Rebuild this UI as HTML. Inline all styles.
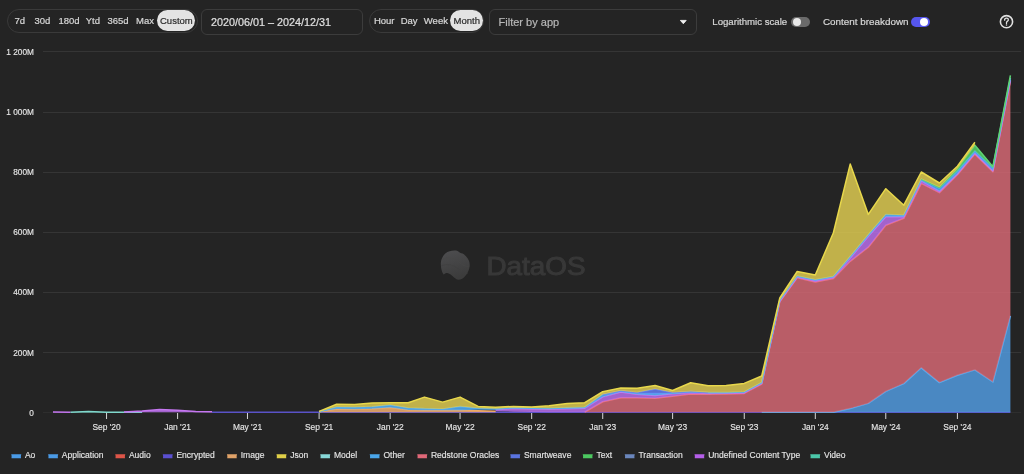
<!DOCTYPE html>
<html><head><meta charset="utf-8"><style>
html,body{-webkit-font-smoothing:antialiased;margin:0;padding:0;width:1024px;height:474px;overflow:hidden;background:#242424;font-family:"Liberation Sans",sans-serif;}
.a{position:absolute;}
.wrap{position:absolute;left:0;top:0;width:1024px;height:474px;will-change:transform;}
.pill{position:absolute;border:1px solid #3a3a3a;border-radius:13px;box-sizing:border-box;}
.t{position:absolute;color:#d8d8d8;font-size:9.5px;line-height:12px;white-space:nowrap;-webkit-text-stroke:0.2px currentColor;}
.sel{position:absolute;background:#e3e3e3;border-radius:11px;}
.box{position:absolute;border:1px solid #3c3c3c;border-radius:6px;box-sizing:border-box;}
</style></head><body><div class="wrap">
<div class="pill" style="left:7px;top:9px;width:191px;height:24px;"></div>
<div class="t" style="left:14.5px;top:14.5px;">7d</div>
<div class="t" style="left:34.5px;top:14.5px;">30d</div>
<div class="t" style="left:58.5px;top:14.5px;">180d</div>
<div class="t" style="left:85.7px;top:14.5px;">Ytd</div>
<div class="t" style="left:107.5px;top:14.5px;">365d</div>
<div class="t" style="left:136px;top:14.5px;">Max</div>
<div class="sel" style="left:156.5px;top:10.3px;width:38px;height:21px;"></div>
<div class="t" style="left:160px;top:14.5px;color:#2a2a2a;">Custom</div>
<div class="box" style="left:201px;top:9px;width:162px;height:26px;"></div>
<div class="t" style="left:211px;top:15.5px;font-size:10.8px;color:#e0e0e0;">2020/06/01 – 2024/12/31</div>
<div class="pill" style="left:368.5px;top:9px;width:115px;height:24px;"></div>
<div class="t" style="left:373.9px;top:14.5px;">Hour</div>
<div class="t" style="left:400.7px;top:14.5px;">Day</div>
<div class="t" style="left:423.8px;top:14.5px;">Week</div>
<div class="sel" style="left:450px;top:10.4px;width:32.5px;height:20.5px;"></div>
<div class="t" style="left:453.6px;top:14.5px;color:#2a2a2a;">Month</div>
<div class="box" style="left:489px;top:9px;width:208px;height:26px;"></div>
<div class="t" style="left:498.6px;top:15.5px;font-size:11px;color:#b8b8b8;">Filter by app</div>
<svg class="a" style="left:679px;top:19px" width="9" height="6"><path d="M1.4,1.4 L7.2,1.4 L4.3,4.7 Z" fill="#f0f0f0" stroke="#f0f0f0" stroke-width="0.9" stroke-linejoin="round"/></svg>
<div class="t" style="left:712.3px;top:15.5px;font-size:9.65px;">Logarithmic scale</div>
<div class="a" style="left:791px;top:16.5px;width:18.5px;height:10.5px;border-radius:5.25px;background:#6a6a6a;"></div>
<div class="a" style="left:792.5px;top:17.5px;width:8.5px;height:8.5px;border-radius:50%;background:#e8e8e8;"></div>
<div class="t" style="left:823px;top:15.5px;font-size:9.87px;">Content breakdown</div>
<div class="a" style="left:911px;top:16.5px;width:18.5px;height:10.5px;border-radius:5.25px;background:#5656ee;"></div>
<div class="a" style="left:919.5px;top:17.5px;width:8.5px;height:8.5px;border-radius:50%;background:#ffffff;"></div>
<svg class="a" style="left:998px;top:13px" width="18" height="18"><circle cx="8.5" cy="8.7" r="6.1" fill="none" stroke="#e0e0e0" stroke-width="1.6"/><path d="M6.6,7.2 C6.6,5.9 7.4,5.2 8.5,5.2 C9.6,5.2 10.4,5.9 10.4,6.9 C10.4,8 8.5,8.3 8.5,9.6 L8.5,10.4" fill="none" stroke="#e0e0e0" stroke-width="1.3" stroke-linecap="round"/><circle cx="8.5" cy="12.1" r="0.75" fill="#e0e0e0"/></svg>
<svg class="a" style="left:0;top:0" width="1024" height="474">
<line x1="43" x2="1021" y1="51.50" y2="51.50" stroke="#353535" stroke-width="1"/>
<g transform="translate(33.9,54.70) scale(0.93,1)"><text x="0" y="0" text-anchor="end" fill="#e6e6e6" stroke="#e6e6e6" stroke-width="0.15" font-size="8.9" font-family="Liberation Sans, sans-serif">1 200M</text></g>
<line x1="43" x2="1021" y1="112.50" y2="112.50" stroke="#353535" stroke-width="1"/>
<g transform="translate(33.9,114.87) scale(0.93,1)"><text x="0" y="0" text-anchor="end" fill="#e6e6e6" stroke="#e6e6e6" stroke-width="0.15" font-size="8.9" font-family="Liberation Sans, sans-serif">1 000M</text></g>
<line x1="43" x2="1021" y1="172.50" y2="172.50" stroke="#353535" stroke-width="1"/>
<g transform="translate(33.9,175.03) scale(0.93,1)"><text x="0" y="0" text-anchor="end" fill="#e6e6e6" stroke="#e6e6e6" stroke-width="0.15" font-size="8.9" font-family="Liberation Sans, sans-serif">800M</text></g>
<line x1="43" x2="1021" y1="232.50" y2="232.50" stroke="#353535" stroke-width="1"/>
<g transform="translate(33.9,235.20) scale(0.93,1)"><text x="0" y="0" text-anchor="end" fill="#e6e6e6" stroke="#e6e6e6" stroke-width="0.15" font-size="8.9" font-family="Liberation Sans, sans-serif">600M</text></g>
<line x1="43" x2="1021" y1="292.50" y2="292.50" stroke="#353535" stroke-width="1"/>
<g transform="translate(33.9,295.37) scale(0.93,1)"><text x="0" y="0" text-anchor="end" fill="#e6e6e6" stroke="#e6e6e6" stroke-width="0.15" font-size="8.9" font-family="Liberation Sans, sans-serif">400M</text></g>
<line x1="43" x2="1021" y1="352.50" y2="352.50" stroke="#353535" stroke-width="1"/>
<g transform="translate(33.9,355.53) scale(0.93,1)"><text x="0" y="0" text-anchor="end" fill="#e6e6e6" stroke="#e6e6e6" stroke-width="0.15" font-size="8.9" font-family="Liberation Sans, sans-serif">200M</text></g>
<line x1="43" x2="1021" y1="412.50" y2="412.50" stroke="#2e2e2e" stroke-width="1"/>
<g transform="translate(33.9,415.70) scale(0.93,1)"><text x="0" y="0" text-anchor="end" fill="#e6e6e6" stroke="#e6e6e6" stroke-width="0.15" font-size="8.9" font-family="Liberation Sans, sans-serif">0</text></g>
<defs><linearGradient id="lg" x1="0" y1="0" x2="0.3" y2="1"><stop offset="0" stop-color="#4e4e50"/><stop offset="1" stop-color="#3c3c3c"/></linearGradient></defs>
<g transform="translate(436,246)"><path d="M 9.6,7.2 C 12,5.2 16,4.4 19.2,4.6 C 20.5,4.7 21.5,5 22,5.2 C 23.2,6.4 24.8,7.4 26.6,7.6 C 30.5,10 33.6,14 33.7,18.4 C 33.8,23.5 31.3,28.6 27.3,32 C 25.8,33.2 24,33.8 22.5,33.7 C 20.5,33.3 19.5,32.5 18.4,31.7 C 16.5,30 15,28.5 13.6,28 C 12.2,27 11,26.8 10.4,26.9 C 9.2,27.1 8.4,28 7.6,28.5 C 5.8,26.5 4.8,22 4.8,17.6 C 4.8,13.8 6.8,9.6 9.6,7.2 Z" fill="url(#lg)"/>
<path d="M5.5,14 C 12,10 18,12 24,17 C 28,20 31,21 33.5,20" fill="none" stroke="#484848" stroke-width="1" opacity="0.6"/>
<path d="M5,20 C 12,17 18,19 24,24 C 27,26.5 30,28 32,27" fill="none" stroke="#404040" stroke-width="1" opacity="0.6"/>
</g>
<text x="486.5" y="275.4" fill="#383838" stroke="#383838" stroke-width="1" font-size="26.5" font-family="Liberation Sans, sans-serif" textLength="99" lengthAdjust="spacingAndGlyphs">DataOS</text>
<path d="M212.0,412.20 L230.0,412.20 L247.5,412.20 L265.5,412.20 L283.0,412.20 L301.1,412.20 L319.1,412.20 L336.6,412.20 L354.6,412.20 L372.1,412.20 L390.2,412.20 L408.2,412.20 L424.5,412.20 L442.6,412.20 L460.1,412.20 L478.1,412.20 L495.6,412.20 L513.6,412.20 L531.7,412.20 L549.2,412.20 L567.2,412.20 L584.7,412.20 L602.7,412.20 L620.8,412.20 L637.1,412.20 L655.1,412.20 L672.6,412.20 L690.7,412.20 L708.1,412.20 L726.2,412.20 L744.2,412.20 L761.7,412.20 L779.8,412.20 L797.2,412.20 L815.3,412.20 L833.4,412.20 L850.2,412.20 L868.3,412.20 L885.8,412.20 L903.8,412.20 L921.3,412.20 L939.4,412.20 L957.4,412.20 L974.9,412.20 L992.9,412.20 L1010.4,412.20 L1010.4,412.20 L992.9,412.20 L974.9,412.20 L957.4,412.20 L939.4,412.20 L921.3,412.20 L903.8,412.20 L885.8,412.20 L868.3,412.20 L850.2,412.20 L833.4,412.20 L815.3,412.20 L797.2,412.20 L779.8,412.20 L761.7,412.20 L744.2,412.20 L726.2,412.20 L708.1,412.20 L690.7,412.20 L672.6,412.20 L655.1,412.20 L637.1,412.20 L620.8,412.20 L602.7,412.20 L584.7,412.20 L567.2,412.20 L549.2,412.20 L531.7,412.20 L513.6,412.20 L495.6,412.20 L478.1,412.20 L460.1,412.20 L442.6,412.20 L424.5,412.20 L408.2,412.20 L390.2,412.20 L372.1,412.20 L354.6,412.20 L336.6,412.20 L319.1,412.20 L301.1,412.20 L283.0,412.20 L265.5,412.20 L247.5,412.20 L230.0,412.20 L212.0,412.20Z" fill="rgb(100,90,229)" fill-opacity="0.85"/>
<path d="M212.0,412.20 L230.0,412.20 L247.5,412.20 L265.5,412.20 L283.0,412.20 L301.1,412.20 L319.1,412.20 L336.6,412.20 L354.6,412.20 L372.1,412.20 L390.2,412.20 L408.2,412.20 L424.5,412.20 L442.6,412.20 L460.1,412.20 L478.1,412.20 L495.6,412.20 L513.6,412.20 L531.7,412.20 L549.2,412.20 L567.2,412.20 L584.7,412.20 L602.7,412.20 L620.8,412.20 L637.1,412.20 L655.1,412.20 L672.6,412.20 L690.7,412.20 L708.1,412.20 L726.2,412.20 L744.2,412.20 L761.7,412.20 L779.8,412.20 L797.2,412.20 L815.3,412.20 L833.4,412.20 L850.2,412.20 L868.3,412.20 L885.8,412.20 L903.8,412.20 L921.3,412.20 L939.4,412.20 L957.4,412.20 L974.9,412.20 L992.9,412.20 L1010.4,412.20" fill="none" stroke="#5a52c8" stroke-width="1.5" stroke-linejoin="round"/>
<path d="M70.4,412.20 L88.5,411.40 L106.5,412.20 L124.0,412.20 L142.1,412.20 L142.1,412.20 L124.0,412.20 L106.5,412.20 L88.5,412.20 L70.4,412.20Z" fill="rgb(107,224,205)" fill-opacity="0.85"/>
<path d="M70.4,412.20 L88.5,411.40 L106.5,412.20 L124.0,412.20 L142.1,412.20" fill="none" stroke="#80d8cc" stroke-width="1.5" stroke-linejoin="round"/>
<path d="M761.7,412.20 L779.8,412.20 L797.2,412.20 L815.3,412.20 L833.4,412.20 L850.2,408.60 L868.3,403.40 L885.8,391.40 L903.8,383.60 L921.3,367.80 L939.4,382.60 L957.4,375.20 L974.9,369.90 L992.9,382.00 L1010.4,315.90 L1010.4,412.20 L992.9,412.20 L974.9,412.20 L957.4,412.20 L939.4,412.20 L921.3,412.20 L903.8,412.20 L885.8,412.20 L868.3,412.20 L850.2,412.20 L833.4,412.20 L815.3,412.20 L797.2,412.20 L779.8,412.20 L761.7,412.20Z" fill="rgb(81,154,222)" fill-opacity="0.85"/>
<path d="M761.7,412.20 L779.8,412.20 L797.2,412.20 L815.3,412.20 L833.4,412.20 L850.2,408.60 L868.3,403.40 L885.8,391.40 L903.8,383.60 L921.3,367.80 L939.4,382.60 L957.4,375.20 L974.9,369.90 L992.9,382.00 L1010.4,315.90" fill="none" stroke="#5aaef2" stroke-width="1.5" stroke-linejoin="round"/>
<path d="M319.1,411.70 L336.6,409.10 L354.6,409.20 L372.1,408.70 L390.2,407.50 L408.2,409.90 L424.5,410.20 L442.6,410.20 L460.1,410.20 L478.1,410.70 L495.6,411.20 L495.6,412.20 L478.1,412.20 L460.1,412.20 L442.6,412.20 L424.5,412.20 L408.2,412.20 L390.2,412.20 L372.1,412.20 L354.6,412.20 L336.6,412.20 L319.1,412.20Z" fill="rgb(242,175,109)" fill-opacity="0.85"/>
<path d="M319.1,411.70 L336.6,409.10 L354.6,409.20 L372.1,408.70 L390.2,407.50 L408.2,409.90 L424.5,410.20 L442.6,410.20 L460.1,410.20 L478.1,410.70 L495.6,411.20" fill="none" stroke="#eeaa6a" stroke-width="1.5" stroke-linejoin="round"/>
<path d="M584.7,412.20 L602.7,401.75 L620.8,397.70 L637.1,397.70 L655.1,398.20 L672.6,396.20 L690.7,394.10 L708.1,394.30 L726.2,394.00 L744.2,393.40 L761.7,384.10 L779.8,301.70 L797.2,277.80 L815.3,281.90 L833.4,278.45 L850.2,261.30 L868.3,247.20 L885.8,225.30 L903.8,218.30 L921.3,183.30 L939.4,192.70 L957.4,174.70 L974.9,154.10 L992.9,171.70 L1010.4,80.80 L1010.4,315.90 L992.9,382.00 L974.9,369.90 L957.4,375.20 L939.4,382.60 L921.3,367.80 L903.8,383.60 L885.8,391.40 L868.3,403.40 L850.2,408.60 L833.4,412.20 L815.3,412.20 L797.2,412.20 L779.8,412.20 L761.7,412.20 L744.2,412.20 L726.2,412.20 L708.1,412.20 L690.7,412.20 L672.6,412.20 L655.1,412.20 L637.1,412.20 L620.8,412.20 L602.7,412.20 L584.7,412.20Z" fill="rgb(211,103,115)" fill-opacity="0.85"/>
<path d="M584.7,412.20 L602.7,401.75 L620.8,397.70 L637.1,397.70 L655.1,398.20 L672.6,396.20 L690.7,394.10 L708.1,394.30 L726.2,394.00 L744.2,393.40 L761.7,384.10 L779.8,301.70 L797.2,277.80 L815.3,281.90 L833.4,278.45 L850.2,261.30 L868.3,247.20 L885.8,225.30 L903.8,218.30 L921.3,183.30 L939.4,192.70 L957.4,174.70 L974.9,154.10 L992.9,171.70 L1010.4,80.80" fill="none" stroke="#ee7282" stroke-width="1.5" stroke-linejoin="round"/>
<path d="M53.0,411.90 L70.4,412.20 L70.4,412.20 L53.0,412.20Z" fill="rgb(185,110,234)" fill-opacity="0.85"/>
<path d="M53.0,411.90 L70.4,412.20" fill="none" stroke="#c577f0" stroke-width="1.5" stroke-linejoin="round"/>
<path d="M124.0,411.90 L142.1,410.90 L159.6,409.50 L177.6,410.30 L195.7,411.40 L212.0,411.80 L212.0,412.20 L195.7,412.20 L177.6,412.20 L159.6,412.20 L142.1,412.20 L124.0,412.20Z" fill="rgb(185,110,234)" fill-opacity="0.85"/>
<path d="M124.0,411.90 L142.1,410.90 L159.6,409.50 L177.6,410.30 L195.7,411.40 L212.0,411.80" fill="none" stroke="#c577f0" stroke-width="1.5" stroke-linejoin="round"/>
<path d="M495.6,409.70 L513.6,408.40 L531.7,408.90 L549.2,409.20 L567.2,408.70 L584.7,408.20 L602.7,396.90 L620.8,391.95 L637.1,394.30 L655.1,395.40 L672.6,393.80 L690.7,392.60 L708.1,393.30 L726.2,393.20 L744.2,392.70 L761.7,383.30 L779.8,301.00 L797.2,277.00 L815.3,280.70 L833.4,277.20 L850.2,258.10 L868.3,236.30 L885.8,216.70 L903.8,216.70 L921.3,180.95 L939.4,191.20 L957.4,173.70 L974.9,153.10 L992.9,170.70 L1010.4,79.80 L1010.4,80.80 L992.9,171.70 L974.9,154.10 L957.4,174.70 L939.4,192.70 L921.3,183.30 L903.8,218.30 L885.8,225.30 L868.3,247.20 L850.2,261.30 L833.4,278.45 L815.3,281.90 L797.2,277.80 L779.8,301.70 L761.7,384.10 L744.2,393.40 L726.2,394.00 L708.1,394.30 L690.7,394.10 L672.6,396.20 L655.1,398.20 L637.1,397.70 L620.8,397.70 L602.7,401.75 L584.7,412.20 L567.2,412.20 L549.2,412.20 L531.7,411.90 L513.6,411.70 L495.6,411.20Z" fill="rgb(185,110,234)" fill-opacity="0.85"/>
<path d="M495.6,409.70 L513.6,408.40 L531.7,408.90 L549.2,409.20 L567.2,408.70 L584.7,408.20 L602.7,396.90 L620.8,391.95 L637.1,394.30 L655.1,395.40 L672.6,393.80 L690.7,392.60 L708.1,393.30 L726.2,393.20 L744.2,392.70 L761.7,383.30 L779.8,301.00 L797.2,277.00 L815.3,280.70 L833.4,277.20 L850.2,258.10 L868.3,236.30 L885.8,216.70 L903.8,216.70 L921.3,180.95 L939.4,191.20 L957.4,173.70 L974.9,153.10 L992.9,170.70 L1010.4,79.80" fill="none" stroke="#c577f0" stroke-width="1.5" stroke-linejoin="round"/>
<path d="M319.1,411.70 L336.6,407.00 L354.6,407.20 L372.1,406.70 L390.2,405.00 L408.2,407.90 L424.5,408.60 L442.6,408.90 L460.1,406.60 L478.1,408.20 L495.6,408.70 L513.6,407.40 L531.7,407.90 L549.2,408.20 L567.2,407.70 L584.7,407.20 L602.7,394.40 L620.8,390.70 L637.1,393.50 L655.1,393.50 L672.6,393.30 L690.7,391.60 L708.1,392.50 L726.2,392.40 L744.2,391.90 L761.7,382.50 L779.8,300.00 L797.2,276.00 L815.3,279.70 L833.4,276.60 L850.2,256.60 L868.3,234.70 L885.8,214.40 L903.8,215.20 L921.3,179.10 L939.4,188.20 L957.4,170.70 L974.9,150.70 L992.9,167.70 L1010.4,77.80 L1010.4,79.80 L992.9,170.70 L974.9,153.10 L957.4,173.70 L939.4,191.20 L921.3,180.95 L903.8,216.70 L885.8,216.70 L868.3,236.30 L850.2,258.10 L833.4,277.20 L815.3,280.70 L797.2,277.00 L779.8,301.00 L761.7,383.30 L744.2,392.70 L726.2,393.20 L708.1,393.30 L690.7,392.60 L672.6,393.80 L655.1,395.40 L637.1,394.30 L620.8,391.95 L602.7,396.90 L584.7,408.20 L567.2,408.70 L549.2,409.20 L531.7,408.90 L513.6,408.40 L495.6,409.70 L478.1,409.70 L460.1,410.20 L442.6,410.20 L424.5,410.20 L408.2,409.90 L390.2,407.50 L372.1,408.70 L354.6,409.20 L336.6,409.10 L319.1,411.70Z" fill="rgb(81,175,248)" fill-opacity="0.85"/>
<path d="M319.1,411.70 L336.6,407.00 L354.6,407.20 L372.1,406.70 L390.2,405.00 L408.2,407.90 L424.5,408.60 L442.6,408.90 L460.1,406.60 L478.1,408.20 L495.6,408.70 L513.6,407.40 L531.7,407.90 L549.2,408.20 L567.2,407.70 L584.7,407.20 L602.7,394.40 L620.8,390.70 L637.1,393.50 L655.1,393.50 L672.6,393.30 L690.7,391.60 L708.1,392.50 L726.2,392.40 L744.2,391.90 L761.7,382.50 L779.8,300.00 L797.2,276.00 L815.3,279.70 L833.4,276.60 L850.2,256.60 L868.3,234.70 L885.8,214.40 L903.8,215.20 L921.3,179.10 L939.4,188.20 L957.4,170.70 L974.9,150.70 L992.9,167.70 L1010.4,77.80" fill="none" stroke="#58b0f0" stroke-width="1.5" stroke-linejoin="round"/>
<path d="M602.7,394.40 L620.8,390.70 L637.1,392.50 L655.1,389.10 L672.6,392.50 L690.7,391.60 L708.1,392.50 L708.1,392.50 L690.7,391.60 L672.6,393.30 L655.1,393.50 L637.1,393.50 L620.8,390.70 L602.7,394.40Z" fill="rgb(100,125,245)" fill-opacity="0.85"/>
<path d="M602.7,394.40 L620.8,390.70 L637.1,392.50 L655.1,389.10 L672.6,392.50 L690.7,391.60 L708.1,392.50" fill="none" stroke="#6a86f0" stroke-width="1.5" stroke-linejoin="round"/>
<path d="M921.3,179.10 L939.4,187.20 L957.4,168.70 L974.9,145.20 L992.9,166.70 L1010.4,75.30 L1010.4,77.80 L992.9,167.70 L974.9,150.70 L957.4,170.70 L939.4,188.20 L921.3,179.10Z" fill="rgb(83,210,104)" fill-opacity="0.85"/>
<path d="M921.3,179.10 L939.4,187.20 L957.4,168.70 L974.9,145.20 L992.9,166.70 L1010.4,75.30" fill="none" stroke="#5fd472" stroke-width="1.5" stroke-linejoin="round"/>
<path d="M319.1,411.40 L336.6,404.30 L354.6,404.40 L372.1,403.10 L390.2,402.70 L408.2,402.80 L424.5,397.10 L442.6,402.10 L460.1,397.10 L478.1,406.40 L495.6,407.20 L513.6,406.40 L531.7,407.10 L549.2,405.70 L567.2,403.40 L584.7,402.70 L602.7,391.75 L620.8,388.00 L637.1,388.20 L655.1,385.45 L672.6,390.50 L690.7,382.80 L708.1,385.70 L726.2,385.40 L744.2,383.40 L761.7,376.00 L779.8,298.00 L797.2,271.50 L815.3,275.00 L833.4,232.80 L850.2,164.10 L868.3,214.40 L885.8,188.70 L903.8,205.20 L921.3,172.00 L939.4,183.00 L957.4,166.20 L974.9,142.30 L974.9,145.20 L957.4,168.70 L939.4,187.20 L921.3,179.10 L903.8,215.20 L885.8,214.40 L868.3,234.70 L850.2,256.60 L833.4,276.60 L815.3,279.70 L797.2,276.00 L779.8,300.00 L761.7,382.50 L744.2,391.90 L726.2,392.40 L708.1,392.50 L690.7,391.60 L672.6,392.50 L655.1,389.10 L637.1,392.50 L620.8,390.70 L602.7,394.40 L584.7,407.20 L567.2,407.70 L549.2,408.20 L531.7,407.90 L513.6,407.40 L495.6,408.70 L478.1,408.20 L460.1,406.60 L442.6,408.90 L424.5,408.60 L408.2,407.90 L390.2,405.00 L372.1,406.70 L354.6,407.20 L336.6,407.00 L319.1,411.70Z" fill="rgb(221,202,81)" fill-opacity="0.85"/>
<path d="M319.1,411.40 L336.6,404.30 L354.6,404.40 L372.1,403.10 L390.2,402.70 L408.2,402.80 L424.5,397.10 L442.6,402.10 L460.1,397.10 L478.1,406.40 L495.6,407.20 L513.6,406.40 L531.7,407.10 L549.2,405.70 L567.2,403.40 L584.7,402.70 L602.7,391.75 L620.8,388.00 L637.1,388.20 L655.1,385.45 L672.6,390.50 L690.7,382.80 L708.1,385.70 L726.2,385.40 L744.2,383.40 L761.7,376.00 L779.8,298.00 L797.2,271.50 L815.3,275.00 L833.4,232.80 L850.2,164.10 L868.3,214.40 L885.8,188.70 L903.8,205.20 L921.3,172.00 L939.4,183.00 L957.4,166.20 L974.9,142.30" fill="none" stroke="#e8d84c" stroke-width="1.5" stroke-linejoin="round"/>
<line x1="106.55" x2="106.55" y1="413" y2="419" stroke="#d8d8d8" stroke-width="1"/>
<g transform="translate(106.55,429.9) scale(0.885,1)"><text x="0" y="0" text-anchor="middle" fill="#e6e6e6" stroke="#e6e6e6" stroke-width="0.15" font-size="9.5" font-family="Liberation Sans, sans-serif">Sep '20</text></g>
<line x1="177.6" x2="177.6" y1="413" y2="419" stroke="#d8d8d8" stroke-width="1"/>
<g transform="translate(177.6,429.9) scale(0.885,1)"><text x="0" y="0" text-anchor="middle" fill="#e6e6e6" stroke="#e6e6e6" stroke-width="0.15" font-size="9.5" font-family="Liberation Sans, sans-serif">Jan '21</text></g>
<line x1="247.48" x2="247.48" y1="413" y2="419" stroke="#d8d8d8" stroke-width="1"/>
<g transform="translate(247.48,429.9) scale(0.885,1)"><text x="0" y="0" text-anchor="middle" fill="#e6e6e6" stroke="#e6e6e6" stroke-width="0.15" font-size="9.5" font-family="Liberation Sans, sans-serif">May '21</text></g>
<line x1="319.12" x2="319.12" y1="413" y2="419" stroke="#d8d8d8" stroke-width="1"/>
<g transform="translate(319.12,429.9) scale(0.885,1)"><text x="0" y="0" text-anchor="middle" fill="#e6e6e6" stroke="#e6e6e6" stroke-width="0.15" font-size="9.5" font-family="Liberation Sans, sans-serif">Sep '21</text></g>
<line x1="390.17" x2="390.17" y1="413" y2="419" stroke="#d8d8d8" stroke-width="1"/>
<g transform="translate(390.17,429.9) scale(0.885,1)"><text x="0" y="0" text-anchor="middle" fill="#e6e6e6" stroke="#e6e6e6" stroke-width="0.15" font-size="9.5" font-family="Liberation Sans, sans-serif">Jan '22</text></g>
<line x1="460.05" x2="460.05" y1="413" y2="419" stroke="#d8d8d8" stroke-width="1"/>
<g transform="translate(460.05,429.9) scale(0.885,1)"><text x="0" y="0" text-anchor="middle" fill="#e6e6e6" stroke="#e6e6e6" stroke-width="0.15" font-size="9.5" font-family="Liberation Sans, sans-serif">May '22</text></g>
<line x1="531.68" x2="531.68" y1="413" y2="419" stroke="#d8d8d8" stroke-width="1"/>
<g transform="translate(531.68,429.9) scale(0.885,1)"><text x="0" y="0" text-anchor="middle" fill="#e6e6e6" stroke="#e6e6e6" stroke-width="0.15" font-size="9.5" font-family="Liberation Sans, sans-serif">Sep '22</text></g>
<line x1="602.73" x2="602.73" y1="413" y2="419" stroke="#d8d8d8" stroke-width="1"/>
<g transform="translate(602.73,429.9) scale(0.885,1)"><text x="0" y="0" text-anchor="middle" fill="#e6e6e6" stroke="#e6e6e6" stroke-width="0.15" font-size="9.5" font-family="Liberation Sans, sans-serif">Jan '23</text></g>
<line x1="672.62" x2="672.62" y1="413" y2="419" stroke="#d8d8d8" stroke-width="1"/>
<g transform="translate(672.62,429.9) scale(0.885,1)"><text x="0" y="0" text-anchor="middle" fill="#e6e6e6" stroke="#e6e6e6" stroke-width="0.15" font-size="9.5" font-family="Liberation Sans, sans-serif">May '23</text></g>
<line x1="744.25" x2="744.25" y1="413" y2="419" stroke="#d8d8d8" stroke-width="1"/>
<g transform="translate(744.25,429.9) scale(0.885,1)"><text x="0" y="0" text-anchor="middle" fill="#e6e6e6" stroke="#e6e6e6" stroke-width="0.15" font-size="9.5" font-family="Liberation Sans, sans-serif">Sep '23</text></g>
<line x1="815.3" x2="815.3" y1="413" y2="419" stroke="#d8d8d8" stroke-width="1"/>
<g transform="translate(815.3,429.9) scale(0.885,1)"><text x="0" y="0" text-anchor="middle" fill="#e6e6e6" stroke="#e6e6e6" stroke-width="0.15" font-size="9.5" font-family="Liberation Sans, sans-serif">Jan '24</text></g>
<line x1="885.77" x2="885.77" y1="413" y2="419" stroke="#d8d8d8" stroke-width="1"/>
<g transform="translate(885.77,429.9) scale(0.885,1)"><text x="0" y="0" text-anchor="middle" fill="#e6e6e6" stroke="#e6e6e6" stroke-width="0.15" font-size="9.5" font-family="Liberation Sans, sans-serif">May '24</text></g>
<line x1="957.4" x2="957.4" y1="413" y2="419" stroke="#d8d8d8" stroke-width="1"/>
<g transform="translate(957.4,429.9) scale(0.885,1)"><text x="0" y="0" text-anchor="middle" fill="#e6e6e6" stroke="#e6e6e6" stroke-width="0.15" font-size="9.5" font-family="Liberation Sans, sans-serif">Sep '24</text></g>
<path d="M11.2,454.2 L21.3,454.2 Q20.5,456.2 21,458.3 L11.5,458.3 Q12,456.2 11.2,454.2 Z" fill="#4a9ae6"/>
<g transform="translate(24.9,458.1) scale(0.92,1)"><text x="0" y="0" fill="#e6e6e6" stroke="#e6e6e6" stroke-width="0.15" font-size="9.3" font-family="Liberation Sans, sans-serif">Ao</text></g>
<path d="M48.1,454.2 L58.2,454.2 Q57.4,456.2 57.9,458.3 L48.4,458.3 Q48.9,456.2 48.1,454.2 Z" fill="#4a9ae6"/>
<g transform="translate(61.8,458.1) scale(0.92,1)"><text x="0" y="0" fill="#e6e6e6" stroke="#e6e6e6" stroke-width="0.15" font-size="9.3" font-family="Liberation Sans, sans-serif">Application</text></g>
<path d="M115.2,454.2 L125.3,454.2 Q124.5,456.2 125,458.3 L115.5,458.3 Q116,456.2 115.2,454.2 Z" fill="#dd5548"/>
<g transform="translate(128.9,458.1) scale(0.92,1)"><text x="0" y="0" fill="#e6e6e6" stroke="#e6e6e6" stroke-width="0.15" font-size="9.3" font-family="Liberation Sans, sans-serif">Audio</text></g>
<path d="M162.7,454.2 L172.8,454.2 Q172.0,456.2 172.5,458.3 L163.0,458.3 Q163.5,456.2 162.7,454.2 Z" fill="#5a4fd0"/>
<g transform="translate(176.4,458.1) scale(0.92,1)"><text x="0" y="0" fill="#e6e6e6" stroke="#e6e6e6" stroke-width="0.15" font-size="9.3" font-family="Liberation Sans, sans-serif">Encrypted</text></g>
<path d="M226.95,454.2 L237.05,454.2 Q236.25,456.2 236.75,458.3 L227.25,458.3 Q227.75,456.2 226.95,454.2 Z" fill="#e0a268"/>
<g transform="translate(240.65,458.1) scale(0.92,1)"><text x="0" y="0" fill="#e6e6e6" stroke="#e6e6e6" stroke-width="0.15" font-size="9.3" font-family="Liberation Sans, sans-serif">Image</text></g>
<path d="M276.45,454.2 L286.55,454.2 Q285.75,456.2 286.25,458.3 L276.75,458.3 Q277.25,456.2 276.45,454.2 Z" fill="#e0cf48"/>
<g transform="translate(290.15,458.1) scale(0.92,1)"><text x="0" y="0" fill="#e6e6e6" stroke="#e6e6e6" stroke-width="0.15" font-size="9.3" font-family="Liberation Sans, sans-serif">Json</text></g>
<path d="M320.2,454.2 L330.3,454.2 Q329.5,456.2 330,458.3 L320.5,458.3 Q321,456.2 320.2,454.2 Z" fill="#88d8d8"/>
<g transform="translate(333.9,458.1) scale(0.92,1)"><text x="0" y="0" fill="#e6e6e6" stroke="#e6e6e6" stroke-width="0.15" font-size="9.3" font-family="Liberation Sans, sans-serif">Model</text></g>
<path d="M369.7,454.2 L379.8,454.2 Q379.0,456.2 379.5,458.3 L370.0,458.3 Q370.5,456.2 369.7,454.2 Z" fill="#4aa6ea"/>
<g transform="translate(383.4,458.1) scale(0.92,1)"><text x="0" y="0" fill="#e6e6e6" stroke="#e6e6e6" stroke-width="0.15" font-size="9.3" font-family="Liberation Sans, sans-serif">Other</text></g>
<path d="M417.2,454.2 L427.3,454.2 Q426.5,456.2 427,458.3 L417.5,458.3 Q418,456.2 417.2,454.2 Z" fill="#e06878"/>
<g transform="translate(430.9,458.1) scale(0.92,1)"><text x="0" y="0" fill="#e6e6e6" stroke="#e6e6e6" stroke-width="0.15" font-size="9.3" font-family="Liberation Sans, sans-serif">Redstone Oracles</text></g>
<path d="M510.2,454.2 L520.3,454.2 Q519.5,456.2 520,458.3 L510.5,458.3 Q511,456.2 510.2,454.2 Z" fill="#5a74e0"/>
<g transform="translate(523.9,458.1) scale(0.92,1)"><text x="0" y="0" fill="#e6e6e6" stroke="#e6e6e6" stroke-width="0.15" font-size="9.3" font-family="Liberation Sans, sans-serif">Smartweave</text></g>
<path d="M582.7,454.2 L592.8,454.2 Q592.0,456.2 592.5,458.3 L583.0,458.3 Q583.5,456.2 582.7,454.2 Z" fill="#4cc860"/>
<g transform="translate(596.4,458.1) scale(0.92,1)"><text x="0" y="0" fill="#e6e6e6" stroke="#e6e6e6" stroke-width="0.15" font-size="9.3" font-family="Liberation Sans, sans-serif">Text</text></g>
<path d="M624.7,454.2 L634.8,454.2 Q634.0,456.2 634.5,458.3 L625.0,458.3 Q625.5,456.2 624.7,454.2 Z" fill="#6a86bc"/>
<g transform="translate(638.4,458.1) scale(0.92,1)"><text x="0" y="0" fill="#e6e6e6" stroke="#e6e6e6" stroke-width="0.15" font-size="9.3" font-family="Liberation Sans, sans-serif">Transaction</text></g>
<path d="M694.45,454.2 L704.55,454.2 Q703.75,456.2 704.25,458.3 L694.75,458.3 Q695.25,456.2 694.45,454.2 Z" fill="#b45ee8"/>
<g transform="translate(708.15,458.1) scale(0.92,1)"><text x="0" y="0" fill="#e6e6e6" stroke="#e6e6e6" stroke-width="0.15" font-size="9.3" font-family="Liberation Sans, sans-serif">Undefined Content Type</text></g>
<path d="M810.2,454.2 L820.3,454.2 Q819.5,456.2 820,458.3 L810.5,458.3 Q811,456.2 810.2,454.2 Z" fill="#4cc8aa"/>
<g transform="translate(823.9,458.1) scale(0.92,1)"><text x="0" y="0" fill="#e6e6e6" stroke="#e6e6e6" stroke-width="0.15" font-size="9.3" font-family="Liberation Sans, sans-serif">Video</text></g>
</svg>
</div></body></html>
